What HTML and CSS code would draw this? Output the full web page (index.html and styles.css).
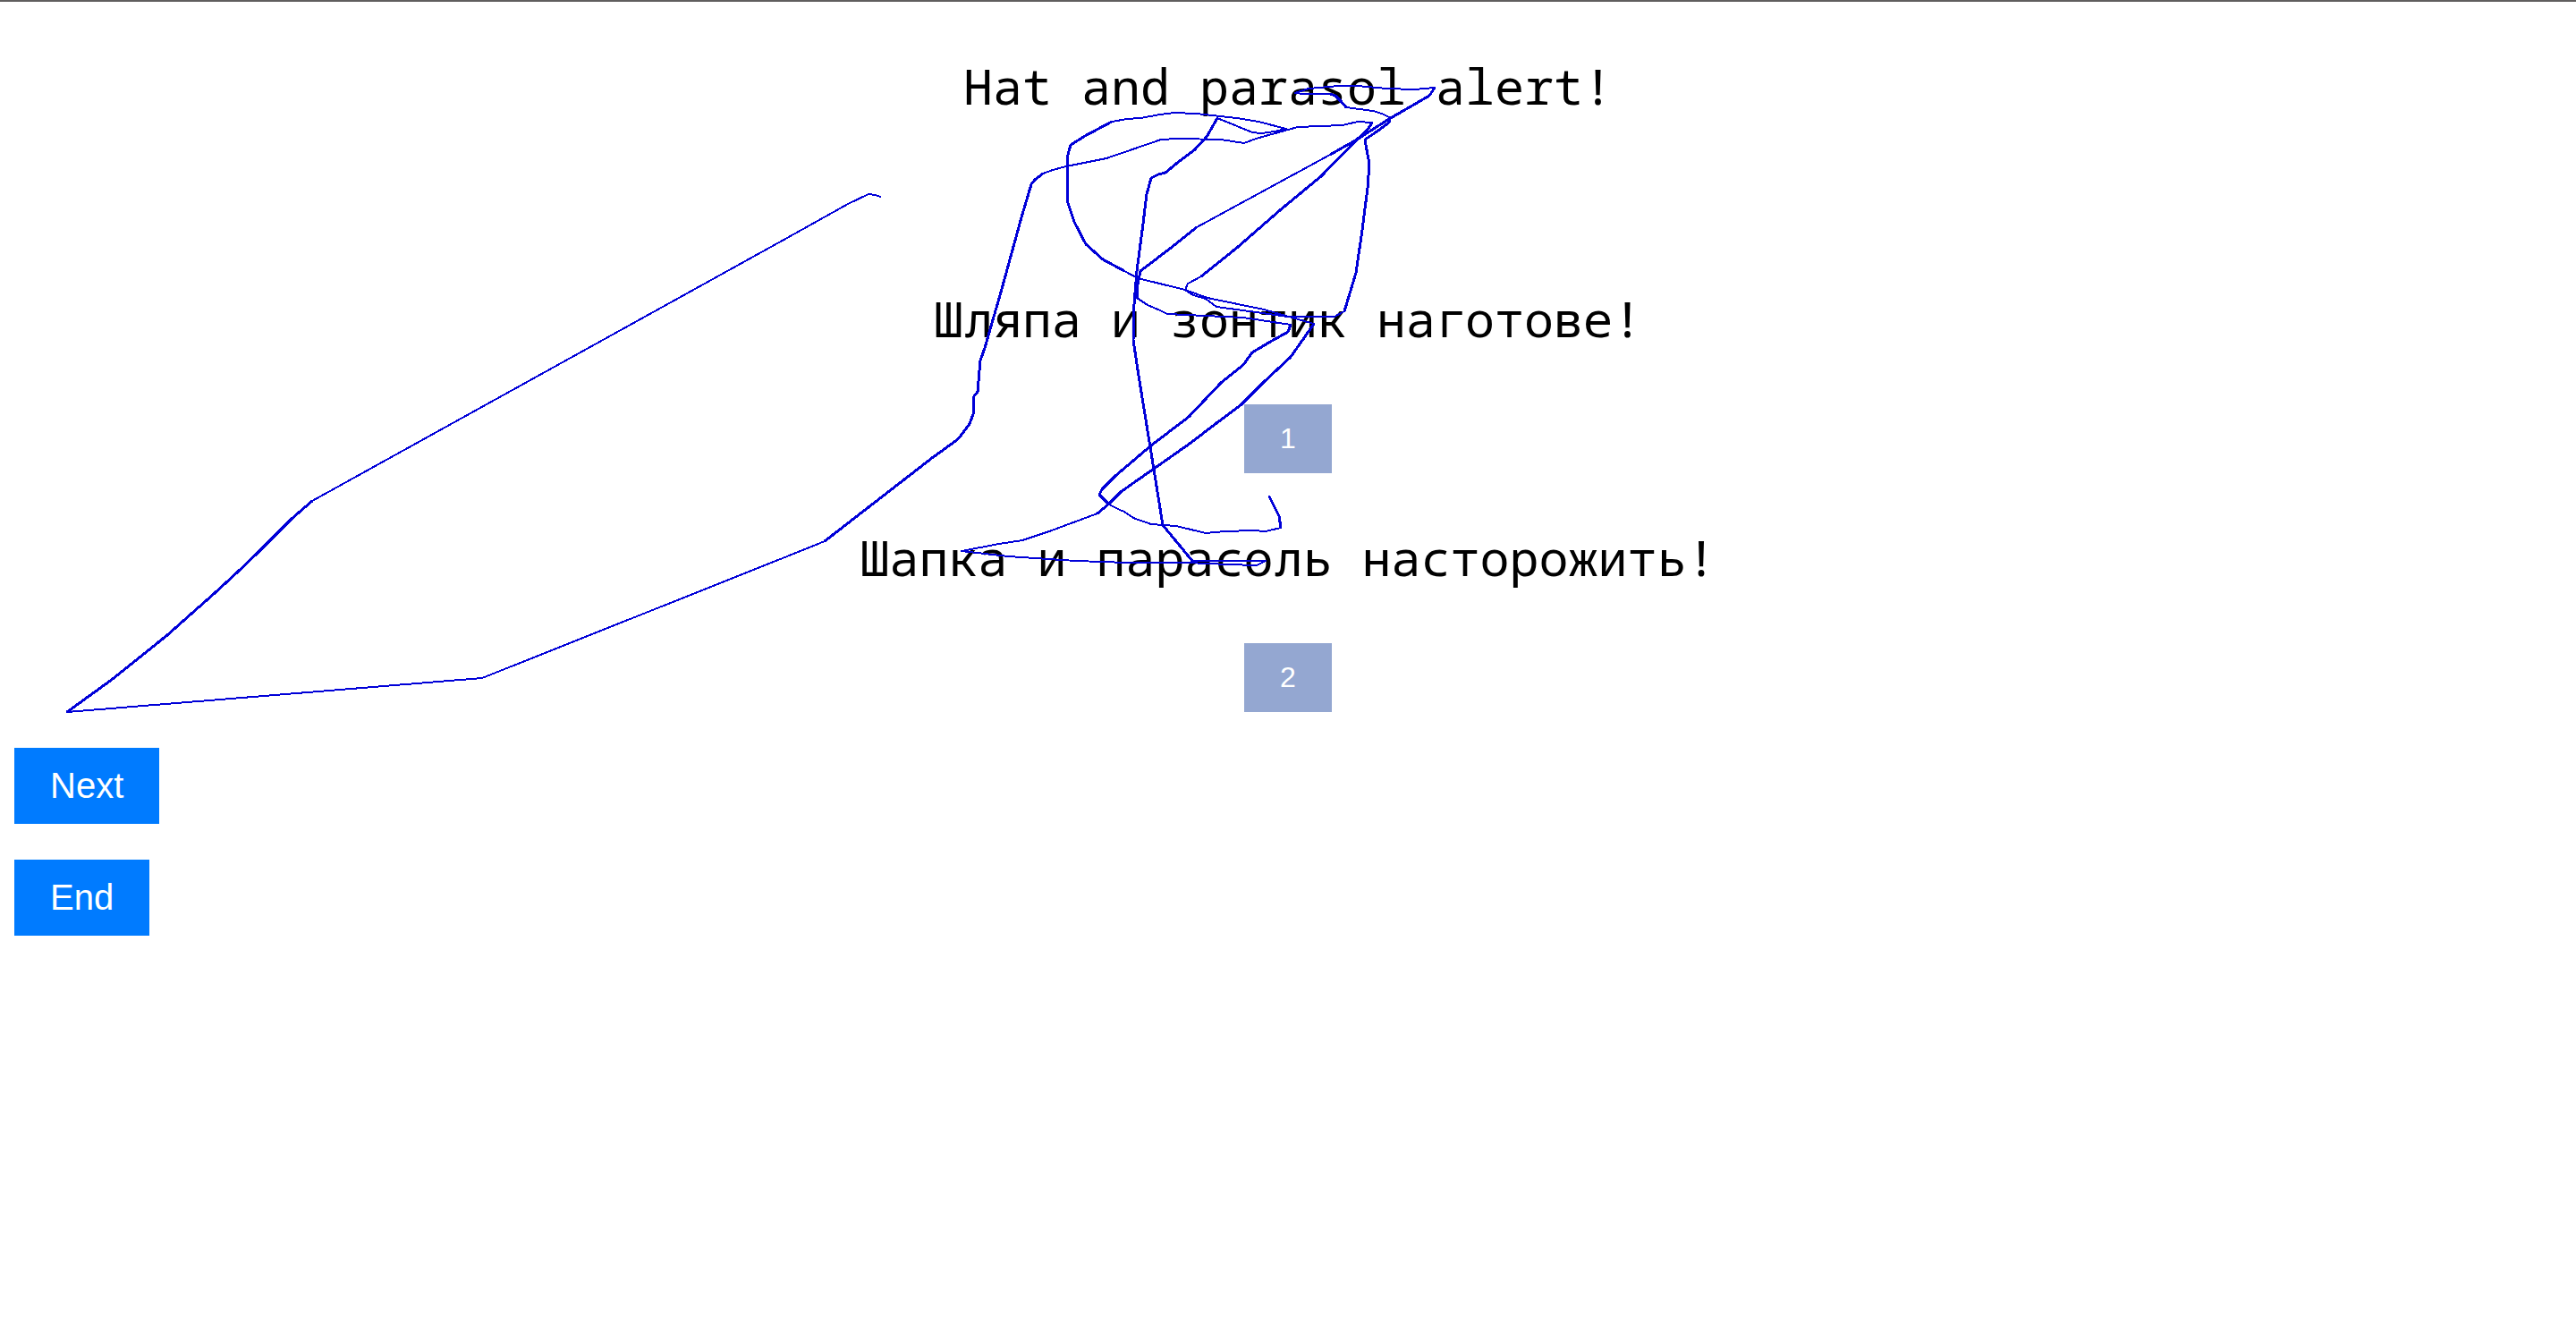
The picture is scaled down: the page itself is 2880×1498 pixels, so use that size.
FILE: index.html
```html
<!DOCTYPE html>
<html lang="ru">
<head>
<meta charset="utf-8">
<title>Hat and parasol alert!</title>
<link rel="stylesheet" href="styles.css">
</head>
<body>
<main class="trial">
  <h1 class="phrase source">Hat and parasol alert!</h1>
  <section class="option">
    <p class="phrase">Шляпа и зонтик наготове!</p>
    <button class="choice" type="button">1</button>
  </section>
  <section class="option">
    <p class="phrase">Шапка и парасоль насторожить!</p>
    <button class="choice" type="button">2</button>
  </section>
</main>
<nav class="controls">
  <button class="control" type="button">Next</button>
  <button class="control" type="button">End</button>
</nav>
<!-- Pointer trail drawn over the page -->
<svg class="trail" width="1" height="1" aria-hidden="true">
  <g class="thin">
    <path d="M984 220L979 218L971 217L948 228L880 266L349 560"/>
    <path d="M75 796L539 758L880 622L922 605"/>
    <path d="M1166 194L1177 190L1192 186L1237 177L1298 156L1317 155L1365 156L1378 158L1391 160L1404 155L1451 142L1501 140L1518 136L1534 137"/>
    <path d="M1343 309L1328 317L1325 324L1334 330L1348 334L1360 343L1397 348L1440 354L1492 354L1503 348"/>
    <path d="M1553 131L1545 127L1535 124L1505 120M1487 105L1457 105L1448 104L1463 99L1497 96L1517 96L1550 99L1582 100L1604 98"/>
    <path d="M1487 173L1338 254M1271 333L1283 341L1297 347L1305 351L1390 355L1443 363"/>
    <path d="M1438 144L1407 136L1383 132L1337 127L1313 126L1297 128L1275 132L1260 133L1243 136M1257 303L1272 311L1325 324L1350 333L1413 346L1469 362"/>
    <path d="M1438 144L1425 147L1410 149L1400 148L1361 132M1333 627L1405 627L1415 627L1405 632L1373 631L1327 629L1260 629L1203 627L1127 622L1075 616L1117 608L1143 604L1173 594L1227 574"/>
    <path d="M1240 564L1252 570L1257 572L1267 579L1287 586L1315 588L1348 596L1370 594L1400 593L1415 594L1432 590"/>
  </g>
  <g class="thick">
    <path d="M349 560L326 580L287 619L265 640L240 663L187 710L126 759L97 780L75 796"/>
    <path d="M922 605L1042 512L1071 491L1084 474L1088 463L1089 443L1093 438L1096 403L1101 389L1120 323L1142 243L1153 206L1157 201L1166 194"/>
    <path d="M1534 137L1529 145L1517 156L1477 197L1431 235L1384 276L1343 309"/>
    <path d="M1503 348L1516 305L1523 257L1529 210L1531 183L1529 173L1526 156L1538 148L1553 137L1553 131M1505 120L1499 113L1493 107L1487 105"/>
    <path d="M1604 98L1598 107L1553 133L1517 156L1487 173M1338 254L1313 274L1275 303L1272 318L1271 333M1443 363L1440 371L1422 381L1400 394L1390 408L1365 428L1347 447L1329 466L1287 498L1247 532L1232 547L1229 553L1240 564M1432 590L1430 577L1419 555"/>
    <path d="M1243 136L1213 152L1197 162L1194 173L1193 186L1194 227L1201 248L1214 273L1233 290L1257 303"/>
    <path d="M1469 362L1443 399L1413 427L1387 453L1360 473L1330 496L1290 524L1267 540L1253 550L1240 563L1227 574"/>
    <path d="M1361 132L1349 153L1335 168L1315 183L1303 193L1295 195L1287 199L1282 217L1278 250L1271 303L1268 340L1267 380L1273 420L1286 500L1300 587L1333 627"/>
  </g>
</svg>
</body>
</html>
```
FILE: styles.css
```css
body {
  margin: 0;
  border-top: 2px solid #605e5e;
  background: #fff;
  color: #000;
  font-family: "Liberation Sans", Arial, sans-serif;
}

.trial {
  display: flex;
  flex-direction: column;
  align-items: center;
  gap: 58px;
  padding-top: 58px;
}

.phrase {
  margin: 0;
  font: 400 55px/72px Consolas, "Noto Sans Mono", "DejaVu Sans Mono", monospace;
  text-align: center;
}

.source {
  margin-bottom: 130px;
}

.option {
  display: flex;
  flex-direction: column;
  align-items: center;
  gap: 60px;
}

button {
  border: 0;
  border-radius: 0;
  color: #fff;
  font-family: inherit;
}

.choice {
  padding: 20px 40px;
  background: #94a7d1;
  font-size: 32px;
  line-height: 37px;
}

.controls {
  display: flex;
  flex-direction: column;
  align-items: flex-start;
  gap: 40px;
  padding: 40px 16px;
}

.control {
  padding: 20px 40px;
  background: #007bff;
  font-size: 40px;
  line-height: 45px;
}

.trail {
  position: absolute;
  top: 0;
  left: 0;
  overflow: visible;
  fill: none;
  stroke: #0000d8;
  stroke-linejoin: round;
  stroke-linecap: round;
  shape-rendering: crispEdges;
  pointer-events: none;
}

.thin {
  stroke-width: 2px;
}

.thick {
  stroke-width: 3px;
}
```
